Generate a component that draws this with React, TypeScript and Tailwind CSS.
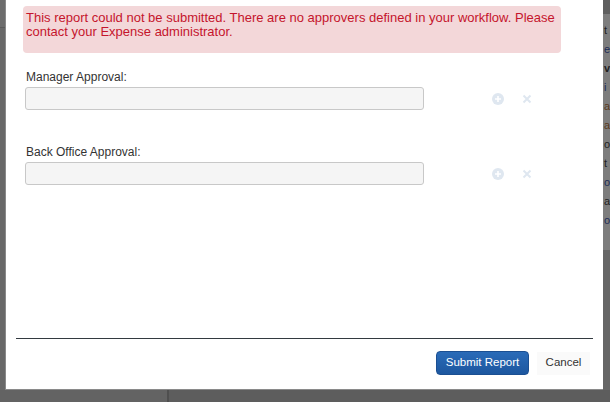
const ghostLetters = [
  { ch: "t", cls: "font-normal" },
  { ch: "e", cls: "font-normal text-[#1d2b55]" },
  { ch: "v", cls: "font-bold" },
  { ch: "i", cls: "font-normal text-[#1d2b55]" },
  { ch: "a", cls: "font-normal text-[#5a3a20]" },
  { ch: "a", cls: "font-normal text-[#5a3a20]" },
  { ch: "o", cls: "font-normal" },
  { ch: "t", cls: "font-normal" },
  { ch: "o", cls: "font-normal text-[#1d2b55]" },
  { ch: "a", cls: "font-normal" },
  { ch: "o", cls: "font-normal text-[#1d2b55]" },
];

const PlusCircle = () => (
  <svg width="12" height="12" viewBox="0 0 12 12">
    <circle cx="6" cy="6" r="6" fill="#dfe7f0" />
    <path d="M6 3v6M3 6h6" stroke="#fff" strokeWidth="1.6" />
  </svg>
);

const Cross = () => (
  <svg width="10" height="10" viewBox="0 0 10 10">
    <path d="M1.5 1.5l7 7M8.5 1.5l-7 7" stroke="#dfe7f0" strokeWidth="2" />
  </svg>
);

const ApproverRow = ({ label }: { label: string }) => (
  <div className="flex flex-col">
    <label className="text-[12px] leading-[14px] text-[#333] ml-[3px]">{label}</label>
    <div className="flex items-center mt-[3px]">
      <input
        className="w-[399px] h-[23px] bg-[#f5f5f5] border border-[#c8c8c8] rounded-[3px] ml-[2px] outline-none"
        readOnly
      />
      <div className="flex items-center ml-[68px] gap-[18px]">
        <PlusCircle />
        <Cross />
      </div>
    </div>
  </div>
);

export default function App() {
  return (
    <div
      className="w-[610px] h-[402px] bg-[#5f5f5f] flex flex-col overflow-hidden"
      style={{ fontFamily: '"Liberation Sans", Arial, sans-serif' }}
    >
      <div className="flex h-[390px]">
        {/* left sliver of page behind overlay */}
        <div className="w-[6px] flex flex-col bg-[#686868] border-r border-[#8a8a8a]">
          <div className="h-[28px] border-b border-[#5a5a5a] bg-[#6c6c6c]" />
        </div>

        {/* modal */}
        <div className="w-[597px] bg-white flex flex-col border-b border-[#8a8a8a]">
          <div className="ml-[17px] w-[538px] mt-[6px] h-[47px] bg-[#f3d7d9] rounded-[4px] px-[3px] pt-[5px] text-[13px] leading-[14px] text-[#c5152c]">
            This report could not be submitted. There are no approvers defined in your workflow. Please
            <br />
            contact your Expense administrator.
          </div>

          <div className="flex flex-col gap-[35px] mt-[17px] ml-[17px]">
            <ApproverRow label="Manager Approval:" />
            <ApproverRow label="Back Office Approval:" />
          </div>

          <div className="flex-1" />

          <div className="mx-[10px] border-t border-[#333a40]" />

          <div className="flex items-center justify-end h-[50px] pr-[13px] pb-[2px]">
            <button className="w-[93px] h-[24px] rounded-[4px] bg-gradient-to-b from-[#2a6bb8] to-[#1d579f] border border-[#1b4f92] text-white text-[11.5px]">
              Submit Report
            </button>
            <button className="ml-[8px] w-[53px] h-[23px] bg-[#fafafa] text-[#333] text-[11.5px]">
              Cancel
            </button>
          </div>
        </div>

        {/* right sliver of page behind overlay */}
        <div className="flex-1 flex flex-col bg-[#666] overflow-hidden">
          <div className="h-[14px] bg-[#5f5f5f]" />
          <div className="h-[236px] bg-[#7d7d7d] flex flex-col pt-[10px] gap-[7px] text-[11px] leading-[12px] text-[#222]">
            {ghostLetters.map((g, i) => (
              <span key={i} className={`ml-[1px] ${g.cls}`}>
                {g.ch}
              </span>
            ))}
          </div>
        </div>
      </div>

      {/* bottom strip */}
      <div className="flex flex-1">
        <div className="w-[169px] bg-[#636363] border-r-2 border-[#4f4f4f]" />
        <div className="flex-1 bg-[#5d5d5d]" />
      </div>
    </div>
  );
}
